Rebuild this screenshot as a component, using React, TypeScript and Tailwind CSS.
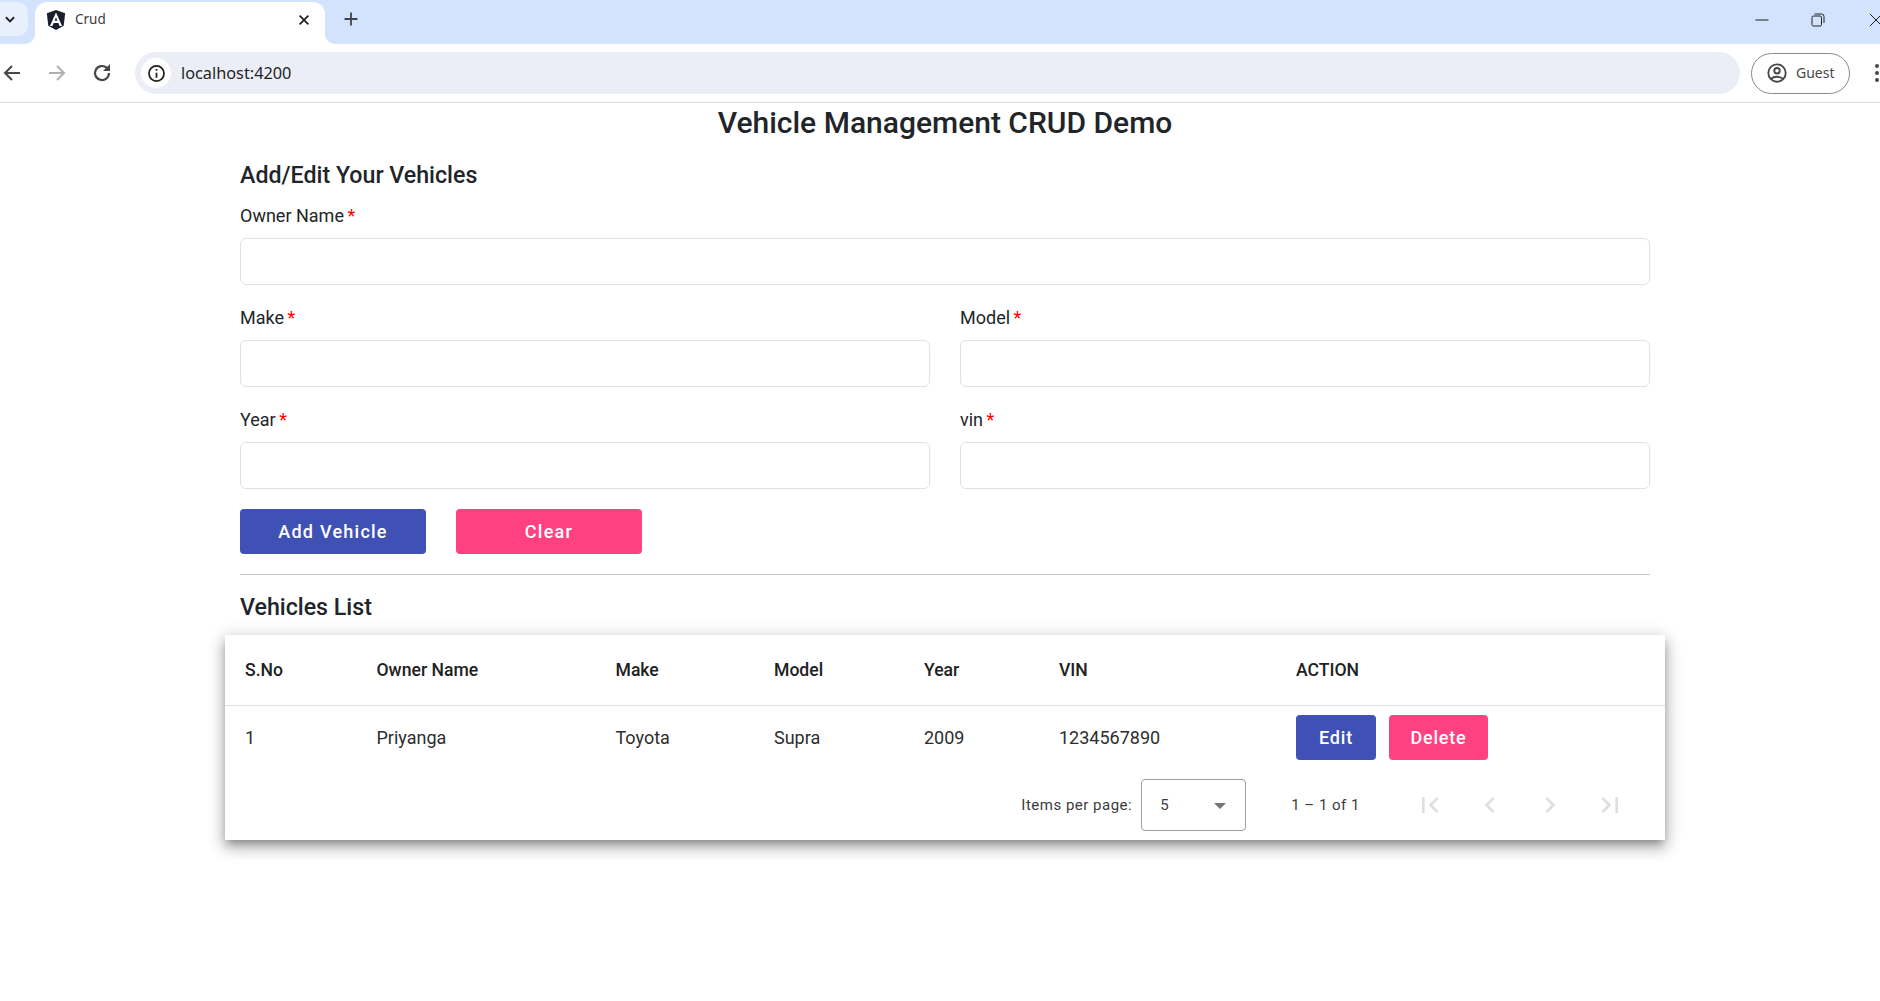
import React from "react";

const roboto = { fontFamily: "Roboto, sans-serif" };

function Field({ label, className = "" }: { label: string; className?: string }) {
  return (
    <div className={`flex flex-col ${className}`}>
      <label className="h-[24px] text-[18px] leading-[24px] text-[#212529]">
        {label}
        <span className="ml-[3.5px] text-[#ff0000]">*</span>
      </label>
      <input className="mt-[10px] h-[47px] w-full rounded-[6px] border border-[#dee2e6] bg-white outline-none" />
    </div>
  );
}

function Cell({ w, children, className = "" }: { w: string; children: React.ReactNode; className?: string }) {
  return <div className={`${w} shrink-0 ${className}`}>{children}</div>;
}

function PagerIcon({ d }: { d: string }) {
  return (
    <button className="flex h-[40px] w-[40px] items-center justify-center">
      <svg viewBox="0 0 24 24" className="h-[32px] w-[32px] shrink-0" fill="#dfdfdf">
        <path d={d} />
      </svg>
    </button>
  );
}

function Chrome() {
  return (
    <div className="flex h-[103px] flex-col border-b border-[#dcdcdc] bg-white" style={{ fontFamily: "'Noto Sans', sans-serif" }}>
      <div className="flex h-[44px] items-end bg-[#d3e3fd]">
        <div className="mb-[8px] flex h-[34px] w-[28px] items-center justify-start rounded-r-[10px] bg-[#e8effd] pl-[3px]">
          <svg viewBox="0 0 24 24" className="h-[14px] w-[14px]" fill="none" stroke="#1f1f1f" strokeWidth="3.2">
            <path d="M5 9l7 7 7-7" />
          </svg>
        </div>
        <div className="relative ml-[7px] flex h-[42px] w-[290px] items-center rounded-t-[12px] bg-white pb-[7px] pl-[10px] pr-[14px]">
          <svg viewBox="0 0 10 10" className="absolute bottom-0 left-[-10px] h-[10px] w-[10px]" fill="#fff">
            <path d="M10 0v10H0A10 10 0 0 0 10 0z" />
          </svg>
          <svg viewBox="0 0 10 10" className="absolute bottom-0 right-[-10px] h-[10px] w-[10px]" fill="#fff">
            <path d="M0 0v10h10A10 10 0 0 1 0 0z" />
          </svg>
          <svg viewBox="0 0 24 24" className="h-[22px] w-[22px]">
            <path d="M12 1 2 4.6l1.6 13.6L12 23l8.4-4.8L22 4.6z" fill="#1b1e2b" />
            <path d="M12 3.8 5.4 18.5h2.7l1.3-3.3h5.2l1.3 3.3h2.7zM10.5 12.9 12 9.1l1.5 3.8z" fill="#fff" />
          </svg>
          <span className="ml-[8px] text-[13.5px] text-[#3c3c3c]">Crud</span>
          <svg viewBox="0 0 16 16" className="ml-auto h-[14px] w-[14px]" fill="none" stroke="#1f1f1f" strokeWidth="2">
            <path d="M3 3l10 10M13 3 3 13" />
          </svg>
        </div>
        <svg viewBox="0 0 16 16" className="mb-[17px] ml-[18px] h-[16px] w-[16px]" fill="none" stroke="#444" strokeWidth="1.8">
          <path d="M8 1.5v13M1.5 8h13" />
        </svg>
        <div className="mb-[17px] ml-auto flex items-center">
          <svg viewBox="0 0 14 14" className="mr-[42px] h-[14px] w-[14px]" fill="none" stroke="#1f1f1f">
            <path d="M0.5 7h13" />
          </svg>
          <svg viewBox="0 0 14 14" className="mr-[44px] h-[14px] w-[14px]" fill="none" stroke="#1f1f1f">
            <rect x="1" y="3" width="9.5" height="10" rx="1.5" />
            <path d="M3.5 1h7A2.5 2.5 0 0 1 13 3.5V10" />
          </svg>
          <svg viewBox="0 0 14 14" className="mr-[-3px] h-[14px] w-[14px]" fill="none" stroke="#1f1f1f">
            <path d="M1 1l12 12M13 1 1 13" />
          </svg>
        </div>
      </div>
      <div className="flex h-[58px] items-center">
        <svg viewBox="0 0 24 24" className="h-[24px] w-[24px]" fill="none" stroke="#474747" strokeWidth="2">
          <path d="M20 12H5M12 5l-7 7 7 7" />
        </svg>
        <svg viewBox="0 0 24 24" className="ml-[21px] h-[24px] w-[24px]" fill="none" stroke="#b0b0b0" strokeWidth="2">
          <path d="M4 12h15M12 5l7 7-7 7" />
        </svg>
        <svg viewBox="0 0 24 24" className="ml-[21px] h-[24px] w-[24px]" fill="none" stroke="#474747" strokeWidth="2.2">
          <path d="M19 12a7 7 0 1 1-2.2-5.1L19 9" />
          <path d="M20 3v7h-7z" strokeWidth="0" fill="#474747" />
        </svg>
        <div className="ml-[21px] flex h-[42px] w-[1605px] items-center rounded-full bg-[#ebeef7] pl-[6px]">
          <div className="flex h-[30px] w-[30px] items-center justify-center rounded-full bg-white">
            <svg viewBox="0 0 24 24" className="h-[19px] w-[19px]" fill="none" stroke="#1f1f1f" strokeWidth="2.2">
              <circle cx="12" cy="12" r="9.5" />
              <path d="M12 11v6.5M12 6.2v2.4" />
            </svg>
          </div>
          <span className="ml-[10px] text-[16.3px] text-[#1f1f1f]">localhost:4200</span>
        </div>
        <div className="ml-[11px] flex h-[41px] w-[99px] items-center rounded-full border border-[#8a8a8a] pb-[1px] pl-[14px]">
          <svg viewBox="0 0 24 24" className="h-[22px] w-[22px]" fill="none" stroke="#474747" strokeWidth="2">
            <circle cx="12" cy="12" r="9.5" />
            <circle cx="12" cy="9.5" r="3" />
            <path d="M5.5 18.5c3-3.2 10-3.2 13 0" />
          </svg>
          <span className="ml-[8px] text-[14px] text-[#474747]">Guest</span>
        </div>
        <svg viewBox="0 0 6 20" className="ml-[24px] h-[20px] w-[6px]" fill="#474747">
          <circle cx="3" cy="3" r="2" />
          <circle cx="3" cy="10" r="2" />
          <circle cx="3" cy="17" r="2" />
        </svg>
      </div>
    </div>
  );
}

export default function App() {
  return (
    <div className="h-[1001px] w-[1880px] overflow-hidden bg-white" style={roboto}>
      <Chrome />
      <h1 className="mt-[2px] h-[36px] pl-[10px] text-center text-[30px] leading-[36px] font-medium text-[#212529]">
        Vehicle Management CRUD Demo
      </h1>
      <div className="mx-[240px] mt-[19px] w-[1410px]">
        <h2 className="h-[30px] text-[23.2px] leading-[30px] font-medium text-[#212529]">Add/Edit Your Vehicles</h2>
        <Field label="Owner Name" className="mt-[14px]" />
        <div className="mt-[21px] grid grid-cols-2 gap-x-[30px] gap-y-[21px]">
          <Field label="Make" />
          <Field label="Model" />
          <Field label="Year" />
          <Field label="vin" />
        </div>
        <div className="mt-[20px] flex gap-[30px]">
          <button className="h-[45px] w-[186px] rounded-[4px] bg-[#3f51b5] text-[18px] font-medium tracking-[1.25px] text-white">
            Add Vehicle
          </button>
          <button className="h-[45px] w-[186px] rounded-[4px] bg-[#ff4081] text-[18px] font-medium tracking-[1.25px] text-white">
            Clear
          </button>
        </div>
        <div className="mt-[20px] h-px bg-[#c8c8c8]" />
        <h2 className="mt-[17px] h-[30px] text-[23.2px] leading-[30px] font-medium text-[#212529]">Vehicles List</h2>
      </div>
      <div className="mx-[225px] mt-[13px] h-[205px] w-[1440px] bg-white shadow-[0_5px_8px_-3px_rgba(0,0,0,0.3),0_8px_14px_1px_rgba(0,0,0,0.2),0_3px_16px_2px_rgba(0,0,0,0.14)]">
        <div className="flex h-[71px] items-center border-b border-[#e0e0e0] pl-[20px] text-[17.6px] font-medium text-[#212121]">
          <Cell w="w-[131.5px]">S.No</Cell>
          <Cell w="w-[239px]">Owner Name</Cell>
          <Cell w="w-[158.5px]">Make</Cell>
          <Cell w="w-[150px]">Model</Cell>
          <Cell w="w-[135px]">Year</Cell>
          <Cell w="w-[237px]">VIN</Cell>
          <Cell w="w-[200px]">ACTION</Cell>
        </div>
        <div className="flex h-[63px] items-center pl-[20px] text-[18px] text-[#2d2d2d]">
          <Cell w="w-[131.5px]">1</Cell>
          <Cell w="w-[239px]">Priyanga</Cell>
          <Cell w="w-[158.5px]">Toyota</Cell>
          <Cell w="w-[150px]">Supra</Cell>
          <Cell w="w-[135px]">2009</Cell>
          <Cell w="w-[237px]">1234567890</Cell>
          <Cell w="w-[200px]" className="flex gap-[13px]">
            <button className="h-[45px] w-[80px] rounded-[4px] bg-[#3f51b5] text-[18px] font-medium tracking-[0.8px] text-white">
              Edit
            </button>
            <button className="h-[45px] w-[99px] rounded-[4px] bg-[#ff4081] text-[18px] font-medium tracking-[0.8px] text-white">
              Delete
            </button>
          </Cell>
        </div>
        <div className="flex h-[71px] items-center justify-end pr-[35px] text-[#3c3c3c]">
          <span className="mt-[2px] text-[15px] tracking-[0.5px]">Items per page:</span>
          <div className="ml-[9px] flex h-[52px] w-[105px] items-center rounded-[4px] border border-[#9e9e9e] pl-[18px] pr-[19px] pt-[2px] text-[15px]">
            5
            <span className="ml-auto h-0 w-0 border-x-[6px] border-t-[6px] border-x-transparent border-t-[#757575]" />
          </div>
          <span className="ml-[45px] mt-[1px] text-[15px] tracking-[0.5px]">1 – 1 of 1</span>
          <div className="ml-[50px] flex gap-[20px]">
            <PagerIcon d="M18.41 16.59 13.82 12l4.59-4.59L17 6l-6 6 6 6zM6 6h2v12H6z" />
            <PagerIcon d="M15.41 7.41 14 6l-6 6 6 6 1.41-1.41L10.83 12z" />
            <PagerIcon d="M10 6 8.59 7.41 13.17 12l-4.58 4.59L10 18l6-6z" />
            <PagerIcon d="M5.59 7.41 10.18 12l-4.59 4.59L7 18l6-6-6-6zM16 6h2v12h-2z" />
          </div>
        </div>
      </div>
    </div>
  );
}
